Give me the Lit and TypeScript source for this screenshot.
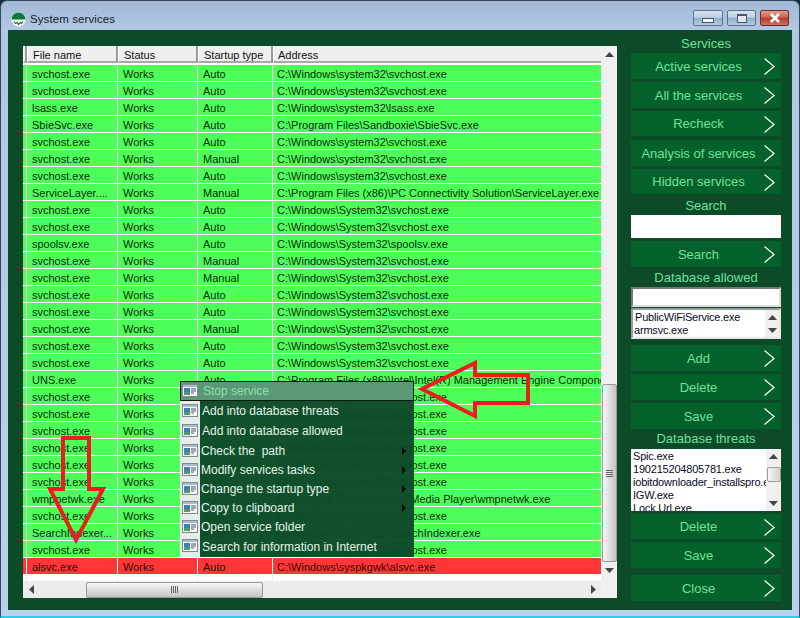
import { LitElement, html, css, svg } from "lit";
import { customElement } from "lit/decorators.js";

type Row = [string, string, string, string];
const S32 = "C:\\Windows\\system32\\svchost.exe";
const S32U = "C:\\Windows\\System32\\svchost.exe";
const rows: Row[] = [
  ["svchost.exe", "Works", "Auto", S32],
  ["svchost.exe", "Works", "Auto", S32],
  ["lsass.exe", "Works", "Auto", "C:\\Windows\\system32\\lsass.exe"],
  ["SbieSvc.exe", "Works", "Auto", "C:\\Program Files\\Sandboxie\\SbieSvc.exe"],
  ["svchost.exe", "Works", "Auto", S32],
  ["svchost.exe", "Works", "Manual", S32],
  ["svchost.exe", "Works", "Auto", S32],
  ["ServiceLayer....", "Works", "Manual", "C:\\Program Files (x86)\\PC Connectivity Solution\\ServiceLayer.exe"],
  ["svchost.exe", "Works", "Auto", S32U],
  ["svchost.exe", "Works", "Auto", S32U],
  ["spoolsv.exe", "Works", "Auto", "C:\\Windows\\System32\\spoolsv.exe"],
  ["svchost.exe", "Works", "Manual", S32U],
  ["svchost.exe", "Works", "Manual", S32U],
  ["svchost.exe", "Works", "Auto", S32U],
  ["svchost.exe", "Works", "Auto", S32U],
  ["svchost.exe", "Works", "Manual", S32U],
  ["svchost.exe", "Works", "Auto", S32U],
  ["svchost.exe", "Works", "Auto", S32U],
  ["UNS.exe", "Works", "Auto", "C:\\Program Files (x86)\\Intel\\Intel(R) Management Engine Components\\UNS\\UNS.exe"],
  ["svchost.exe", "Works", "Auto", S32],
  ["svchost.exe", "Works", "Auto", S32],
  ["svchost.exe", "Works", "Auto", S32],
  ["svchost.exe", "Works", "Auto", S32],
  ["svchost.exe", "Works", "Auto", S32],
  ["svchost.exe", "Works", "Auto", S32],
  ["wmpnetwk.exe", "Works", "Auto", "C:\\Program Files\\Windows Media Player\\wmpnetwk.exe"],
  ["svchost.exe", "Works", "Auto", S32],
  ["SearchIndexer...", "Works", "Auto", "C:\\Windows\\system32\\SearchIndexer.exe"],
  ["svchost.exe", "Works", "Auto", S32],
  ["alsvc.exe", "Works", "Auto", "C:\\Windows\\syspkgwk\\alsvc.exe"],
];

const menu: [string, boolean][] = [
  ["Add into database threats", false],
  ["Add into database allowed", false],
  ["Check the  path", true],
  ["Modify services tasks", true],
  ["Change the startup type", true],
  ["Copy to clipboard", true],
  ["Open service folder", false],
  ["Search for information in Internet", false],
];

const chev = svg`<svg class="chev" width="11" height="17" viewBox="0 0 11 17"><path d="M.5.5 10 8.5.5 16.5" fill="none" stroke="#fff" stroke-width="1.2"/></svg>`;
const up = svg`<svg width="9" height="5" viewBox="0 0 9 5"><path d="M4.5 0 9 5H0z" fill="#444"/></svg>`;
const down = svg`<svg width="9" height="5" viewBox="0 0 9 5"><path d="M0 0h9L4.5 5z" fill="#444"/></svg>`;
const left = svg`<svg width="5" height="9" viewBox="0 0 5 9"><path d="M5 0v9L0 4.5z" fill="#444"/></svg>`;
const right = svg`<svg width="5" height="9" viewBox="0 0 5 9"><path d="M0 0v9l5-4.5z" fill="#444"/></svg>`;
const menuIcon = svg`<svg class="micon" width="16" height="13" viewBox="0 0 16 13"><rect x=".5" y=".5" width="15" height="12" fill="#f4f6f8" stroke="#7d8a94"/><rect x="1" y="1" width="14" height="2" fill="#a9bccb"/><rect x="2" y="4" width="6" height="7" fill="#3f7fb0"/><rect x="2" y="8" width="6" height="3" fill="#4f9a6a"/><path d="M9 5h5M9 7h5M9 9h3" stroke="#556" stroke-width="1"/></svg>`;

@customElement("app-root")
export class AppRoot extends LitElement {
  static styles = css`
    :host { display: block; width: 800px; height: 618px; position: relative; overflow: hidden;
      font-family: "Liberation Sans", Arial, sans-serif; font-size: 11px; background: #1c2a38; }
    .window { width: 800px; height: 618px; box-sizing: border-box; border: 1px solid #33475c; border-bottom: 2px solid #35c8e8;
      border-radius: 7px 7px 0 0; display: flex; flex-direction: column; padding: 0 7px 6px;
      background: linear-gradient(180deg, #a3bad7 0, #b0c8e3 30px, #b9d1ea 100%); }
    .title { height: 29px; display: flex; align-items: center; flex: none; position: relative; }
    .logo { margin: 7px 0 0 3px; flex: none; }
    .title-text { margin: 7px 0 0 4px; color: #14202c; font-size: 11.5px; letter-spacing: .1px; }
    .ctrls { margin-left: auto; margin-right: 3px; display: flex; gap: 4px; align-self: flex-start; margin-top: 9px; }
    .ctrl { width: 29px; height: 16px; border: 1px solid #5d7288; border-radius: 2px; box-sizing: border-box;
      background: linear-gradient(180deg, #d6e2f0 0, #bcd0e6 45%, #92acc9 50%, #b5cbe2 100%); display: flex; align-items: center; justify-content: center; }
    .ctrl.wide { width: 30px; }
    .ctrl.close { border-color: #6f2e2e; background: linear-gradient(180deg, #e0a090 0, #d0604f 45%, #b83a30 52%, #cf7060 100%); }
    .min-g { width: 10px; height: 3px; background: #eef3f8; border: 1px solid #44566a; margin-top: 4px; }
    .max-g { width: 8px; height: 6px; background: #dfe8f2; border: 1px solid #44566a; border-top-width: 2px; }
    .panel { flex: 1; background: #0d4a28; display: flex; padding: 16px 0 12px 15px; min-height: 0; }
    .table { width: 594px; height: 552px; background: #fff; display: grid; grid-template-columns: 578px 16px; grid-template-rows: 535px 17px; flex: none; }
    .grid { overflow: hidden; position: relative; background: #fff; display: flex; flex-direction: column; }
    .head { display: grid; grid-template-columns: 4px 91px 80px 75px 328px; height: 17px; margin-bottom: 2px; flex: none; background: #fff; }
    .hc { background: #efefef; border-right: 2px solid #9a9a9a; border-bottom: 2px solid #a8a8a8; border-left: 1px solid #fff; box-sizing: border-box; padding-left: 5px; line-height: 18px; color: #111; white-space: nowrap; overflow: hidden; }
    .hc.none { padding: 0; }
    .hc:last-child { padding-left: 4px; border-right: none; }
    .row { display: grid; grid-template-columns: 4px 91px 80px 75px 328px; height: 17px; box-sizing: border-box; border-bottom: 1px solid #fff; background: #4dff58; color: #072a0c; flex: none; }
    .row.bad { background: #ff3636; color: #3a0606; }
    .row.blank { background: #fff; border-bottom: none; height: 6px; }
    .row.blank .c { border-right-color: #eee; }
    .c { border-right: 1px solid #fff; padding-left: 5px; line-height: 18px; white-space: nowrap; overflow: hidden; }
    .c:first-child { padding: 0; }
    .c.addr { padding-left: 4px; border-right: none; }
    .vbar { background: #f0f0f0; display: flex; flex-direction: column; align-items: center; position: relative; }
    .hbar { background: #ececec; display: flex; align-items: center; position: relative; }
    .corner { background: #f0f0f0; }
    .arrow-box { height: 17px; flex: none; display: flex; align-items: center; justify-content: center; width: 16px; }
    .vgap { height: 321px; flex: none; }
    .vthumb { width: 15px; height: 178px; flex: none; box-sizing: border-box; border: 1px solid #9a9a9a; border-radius: 2px;
      background: linear-gradient(90deg, #f6f6f6, #dcdcdc 55%, #c4c4c4); display: flex; align-items: center; justify-content: center; }
    .grip-v { width: 7px; height: 7px; background: repeating-linear-gradient(180deg, #666 0 1px, transparent 1px 2px); }
    .hgap { width: 47px; flex: none; }
    .hthumb { width: 177px; height: 16px; flex: none; box-sizing: border-box; border: 1px solid #9a9a9a; border-radius: 2px;
      background: linear-gradient(180deg, #f6f6f6, #dcdcdc 55%, #c4c4c4); display: flex; align-items: center; justify-content: center; }
    .grip-h { width: 7px; height: 7px; background: repeating-linear-gradient(90deg, #666 0 1px, transparent 1px 2px); }
    .hbar .end { margin-left: auto; }

    .side { width: 150px; margin-left: 14px; flex: none; margin-top: -16px; display: flex; flex-direction: column; }
    .lbl { text-align: center; color: #6fe29a; font-size: 13px; line-height: 18px; height: 18px; flex: none; }
    .lbl.low { line-height: 20px; }
    .btn { height: 26px; flex: none; background: #04612b; color: #6fe29a; font-size: 13px; display: flex; align-items: center; justify-content: center; padding-right: 15px; box-sizing: border-box; position: relative; }
    .chev { position: absolute; right: 6px; top: 5px; }
    .input { background: #fff; flex: none; }
    .allow-in { height: 20px; box-sizing: border-box; border: 2px solid; border-color: #777 #ddd #ddd #777; }
    .list { background: #fff; display: flex; overflow: hidden; flex: none; color: #0a0a28; line-height: 13px; letter-spacing: -.2px; }
    .list .items { flex: 1; overflow: hidden; white-space: nowrap; min-width: 0; }
    .list .sb { width: 15px; flex: none; background: #f0f0f0; display: flex; flex-direction: column; align-items: center; }
    .sb .a { height: 15px; display: flex; align-items: center; justify-content: center; flex: none; }
    .sb .f { flex: 1; }
    .sb .t { width: 14px; height: 15px; box-sizing: border-box; border: 1px solid #9a9a9a; border-radius: 2px; background: linear-gradient(90deg, #f6f6f6, #d2d2d2); flex: none; }
    .allow { height: 31px; box-sizing: border-box; border: 2px solid; border-color: #999 #e8e8e8 #e8e8e8 #999; margin-top: 1px; }
    .allow .items { padding: 1px 0 0 1px; }
    .allow .items div { height: 13px; }
    .allow .items div:first-child { padding-left: 1px; }
    .threat { height: 62px; }
    .threat .items { padding: 1px 0 0 2px; }

    .menu { position: absolute; left: 180px; top: 381px; width: 234px; height: 176px; background: rgba(13, 75, 41, .965);
      color: #e4f4e8; font-size: 12px; display: flex; flex-direction: column; }
    .menu::before { content: ""; position: absolute; left: 0; top: 0; bottom: 0; width: 20px; background: #e6ece8; }
    .mi { display: flex; align-items: center; height: 19px; position: relative; flex: none; padding-left: 21px; white-space: pre; }
    .mi.tall { height: 20px; padding-left: 22px; }
    .mi.last { box-sizing: border-box; padding-top: 2px; }
    .mi .micon { position: absolute; left: 2px; top: 3px; }
    .mi.sel { height: 20px; padding-left: 22px; background: #5a9876; border: 1px solid #0a1a10; box-sizing: border-box; color: #86e4a6; z-index: 1; }
    .mi.sel .micon { left: 1px; top: 2px; }
    .sub { position: absolute; left: 222px; top: 6px; width: 0; height: 0; border-left: 4px solid #0a0a0a; border-top: 4px solid transparent; border-bottom: 4px solid transparent; }
    .arrows { position: absolute; left: 0; top: 0; pointer-events: none; }
  `;

  private btn(t: string, h = 26, mt = 0) {
    return html`<div class="btn" style="height:${h}px;margin-top:${mt}px">${t}${chev}</div>`;
  }

  render() {
    return html`
      <div class="window">
        <div class="title">
          <svg class="logo" width="15" height="15" viewBox="0 0 15 15">
            <circle cx="7.5" cy="7.5" r="7.2" fill="#fff" stroke="#b8cfe0" stroke-width=".5"/>
            <path d="M.6 7.5a6.9 6.9 0 0 1 13.8 0z" fill="#0a7a3c"/>
            <path d="M3 9.5l1.5 2 1.5-1 1.5 2 1.5-2 1.5 1 1.5-2" fill="none" stroke="#0a7a3c" stroke-width="1.2"/>
          </svg>
          <span class="title-text">System services</span>
          <div class="ctrls">
            <div class="ctrl wide"><div class="min-g"></div></div>
            <div class="ctrl"><div class="max-g"></div></div>
            <div class="ctrl close">
              <svg width="12" height="10" viewBox="0 0 12 10"><path d="M2 1l8 8M10 1l-8 8" stroke="#fff" stroke-width="2.6"/></svg>
            </div>
          </div>
        </div>
        <div class="panel">
          <div class="table">
            <div class="grid">
              <div class="head">
                <div class="hc none"></div>
                <div class="hc">File name</div><div class="hc">Status</div><div class="hc">Startup type</div><div class="hc">Address</div>
              </div>
              ${rows.map((r, i) => html`
                <div class="row ${i === 29 ? "bad" : ""}">
                  <div class="c"></div><div class="c">${r[0]}</div><div class="c">${r[1]}</div><div class="c">${r[2]}</div><div class="c addr">${r[3]}</div>
                </div>`)}
              <div class="row blank"><div class="c"></div><div class="c"></div><div class="c"></div><div class="c"></div><div class="c addr"></div></div>
            </div>
            <div class="vbar">
              <div class="arrow-box">${up}</div>
              <div class="vgap"></div>
              <div class="vthumb"><div class="grip-v"></div></div>
              <div class="arrow-box">${down}</div>
            </div>
            <div class="hbar">
              <div class="arrow-box">${left}</div>
              <div class="hgap"></div>
              <div class="hthumb"><div class="grip-h"></div></div>
              <div class="arrow-box end">${right}</div>
            </div>
            <div class="corner"></div>
          </div>
          <div class="side">
            <div class="lbl" style="margin-top:5px">Services</div>
            ${this.btn("Active services")}
            ${this.btn("All the services", 26, 3)}
            ${this.btn("Recheck", 25, 3)}
            ${this.btn("Analysis of services", 26, 4)}
            ${this.btn("Hidden services", 25, 3)}
            <div class="lbl low" style="margin-top:2px">Search</div>
            <div class="input" style="height:23px;margin-top:1px"></div>
            ${this.btn("Search", 26, 3)}
            <div class="lbl low" style="margin-top:1px">Database allowed</div>
            <div class="input allow-in" style="margin-top:1px"></div>
            <div class="list allow">
              <div class="items"><div>PublicWiFiService.exe</div><div>armsvc.exe</div></div>
              <div class="sb" style="width:14px"><div class="a" style="height:14px">${up}</div><div class="a" style="height:13px">${down}</div></div>
            </div>
            ${this.btn("Add", 26, 6)}
            ${this.btn("Delete", 26, 3)}
            ${this.btn("Save", 26, 3)}
            <div class="lbl" style="margin-top:1px">Database threats</div>
            <div class="list threat" style="margin-top:1px">
              <div class="items">
                <div>Spic.exe</div><div>190215204805781.exe</div><div>iobitdownloader_installspro.exe</div><div>IGW.exe</div><div>Lock Url.exe</div>
              </div>
              <div class="sb">
                <div class="a">${up}</div><div class="t" style="margin-top:3px"></div><div class="f"></div><div class="a">${down}</div>
              </div>
            </div>
            ${this.btn("Delete", 25, 3)}
            ${this.btn("Save", 26, 3)}
            ${this.btn("Close", 26, 7)}
          </div>
        </div>
      </div>
      <div class="menu">
        <div class="mi sel">${menuIcon}Stop service</div>
        ${menu.map((m, i) => html`
          <div class="mi ${i < 2 || i === 7 ? "tall" : ""} ${i === 7 ? "last" : ""}">${menuIcon}${m[0]}${m[1] ? html`<span class="sub"></span>` : ""}</div>`)}
      </div>
      <svg class="arrows" width="800" height="618" viewBox="0 0 800 618">
        <path d="M422 389 475 363V375H528V403H475V416Z" fill="none" stroke="#ed1c24" stroke-width="4"/>
        <path d="M63 438H89V489H103L76 540 50 489H63Z" fill="none" stroke="#ed1c24" stroke-width="4"/>
      </svg>
    `;
  }
}
